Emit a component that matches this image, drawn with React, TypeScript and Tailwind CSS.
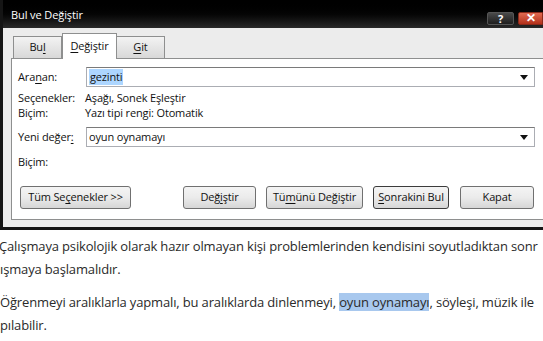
import React from "react";

const U = ({ children }: { children: React.ReactNode }) => (
  <span className="underline underline-offset-2">{children}</span>
);

function Combo({ children }: { children: React.ReactNode }) {
  return (
    <div className="flex-1 h-[20px] bg-white border border-[#abadb3] border-t-[#7a7a7a] flex items-center pl-[2px] pr-[6px]">
      <div className="flex-1 flex items-center">{children}</div>
      <svg width="8" height="5" viewBox="0 0 8 5">
        <path d="M0 0 H8 L4 5 Z" fill="#111" />
      </svg>
    </div>
  );
}

function Btn({ children, w, focus }: { children: React.ReactNode; w: string; focus?: boolean }) {
  return (
    <div
      className={`${w} h-[23px] rounded-[3px] border ${
        focus ? "border-[#3c3c3c]" : "border-[#707070]"
      } bg-gradient-to-b from-[#f4f4f4] via-[#ebebeb] to-[#d6d6d6] flex items-center justify-center text-[#111]`}
    >
      {children}
    </div>
  );
}

export default function App() {
  return (
    <div
      className="w-[543px] h-[341px] bg-white overflow-hidden"
      style={{ fontFamily: '"Open Sans", "Noto Sans", sans-serif' }}
    >
      {/* dialog */}
      <div className="h-[230px] border-l-[3px] border-b-[3px] border-[#151515] flex flex-col">
        <div className="h-[28px] bg-gradient-to-b from-[#000] via-[#050505] to-[#2a2a2a] flex items-center pl-[8px] text-white text-[11px] tracking-[-0.1px]">
          <span className="flex-1 mt-[2px]">Bul ve Değiştir</span>
          <div className="w-[27px] h-[13px] mr-[4px] mt-[8px] rounded-[2px] border border-[#555] bg-gradient-to-b from-[#4a4a4a] to-[#1e1e1e] flex items-center justify-center text-[11px] font-bold leading-none">
            ?
          </div>
          <div className="w-[25px] h-[13px] mt-[8px] rounded-l-[2px] border border-[#8a2a1a] bg-gradient-to-b from-[#e06a50] to-[#b3301a] flex items-center justify-center text-[12px] font-bold leading-none">
            ✕
          </div>
        </div>
        <div className="flex-1 bg-[#ececec] pl-[8px] pt-[4px] flex flex-col text-[11px] tracking-[-0.15px] text-[#111]">
          {/* tabs */}
          <div className="flex items-end h-[26px] pl-[2px]">
            <div className="w-[49px] h-[22px] border border-b-0 border-[#8e8f8f] bg-gradient-to-b from-[#f3f3f3] to-[#d8d8d8] flex items-center justify-center">
              <span>Bu<U>l</U></span>
            </div>
            <div className="w-[55px] h-[26px] border border-b-0 border-[#8e8f8f] bg-white flex items-center justify-center relative z-10 -mb-[1px]">
              <span>
                <U>D</U>eğiştir
              </span>
            </div>
            <div className="w-[48px] h-[22px] border border-b-0 border-l-0 border-[#8e8f8f] bg-gradient-to-b from-[#f3f3f3] to-[#d8d8d8] flex items-center justify-center">
              <span>
                <U>G</U>it
              </span>
            </div>
          </div>
          {/* panel */}
          <div className="h-[162px] bg-white border border-r-0 border-[#8e8f8f] pl-[6px] pr-[8px] pt-[8px] flex flex-col">
            <div className="flex items-center h-[20px]">
              <span className="w-[68px]">
                Ara<U>n</U>an:
              </span>
              <Combo>
                <span className="bg-[#3399ff]/40 px-[1px]">gezinti</span>
              </Combo>
            </div>
            <div className="flex items-center h-[15px] mt-[4px]">
              <span className="w-[67px]">Seçenekler:</span>
              <span>Aşağı, Sonek Eşleştir</span>
            </div>
            <div className="flex items-center h-[15px]">
              <span className="w-[67px]">Biçim:</span>
              <span>Yazı tipi rengi: Otomatik</span>
            </div>
            <div className="flex items-center h-[20px] mt-[6px]">
              <span className="w-[68px]">
                Yeni değer<U>:</U>
              </span>
              <Combo>
                <span>oyun oynamayı</span>
              </Combo>
            </div>
            <div className="flex items-center h-[15px] mt-[8px]">
              <span>Biçim:</span>
            </div>
            <div className="flex items-center mt-[16px] pl-[2px]">
              <Btn w="w-[111px]">
                <span>
                  Tüm Se<U>ç</U>enekler &gt;&gt;
                </span>
              </Btn>
              <div className="w-[52px]" />
              <Btn w="w-[73px]">
                <span>
                  Değ<U>i</U>ştir
                </span>
              </Btn>
              <div className="w-[10px]" />
              <Btn w="w-[97px]">
                <span>
                  Tü<U>m</U>ünü Değiştir
                </span>
              </Btn>
              <div className="w-[10px]" />
              <Btn w="w-[76px]" focus>
                <span>
                  <U>S</U>onrakini Bul
                </span>
              </Btn>
              <div className="w-[11px]" />
              <Btn w="w-[74px]">
                <span>Kapat</span>
              </Btn>
            </div>
          </div>
          <div className="flex-1" />
        </div>
      </div>
      {/* document text */}
      <div
        className="text-[13px] text-[#2a2a2a] leading-[23px] pt-[5px] whitespace-nowrap tracking-[-0.15px]"
        style={{ fontFamily: '"Open Sans", sans-serif' }}
      >
        <div className="-ml-[1px]">
          Çalışmaya psikolojik olarak hazır olmayan kişi problemlerinden kendisini soyutladıktan sonr
        </div>
        <div>ışmaya başlamalıdır.</div>
        <div className="mt-[10px]">
          Öğrenmeyi aralıklarla yapmalı, bu aralıklarda dinlenmeyi,{" "}
          <span className="bg-[#a8c8ee]">oyun oynamayı</span>, söyleşi, müzik ile
        </div>
        <div>pılabilir.</div>
      </div>
    </div>
  );
}
